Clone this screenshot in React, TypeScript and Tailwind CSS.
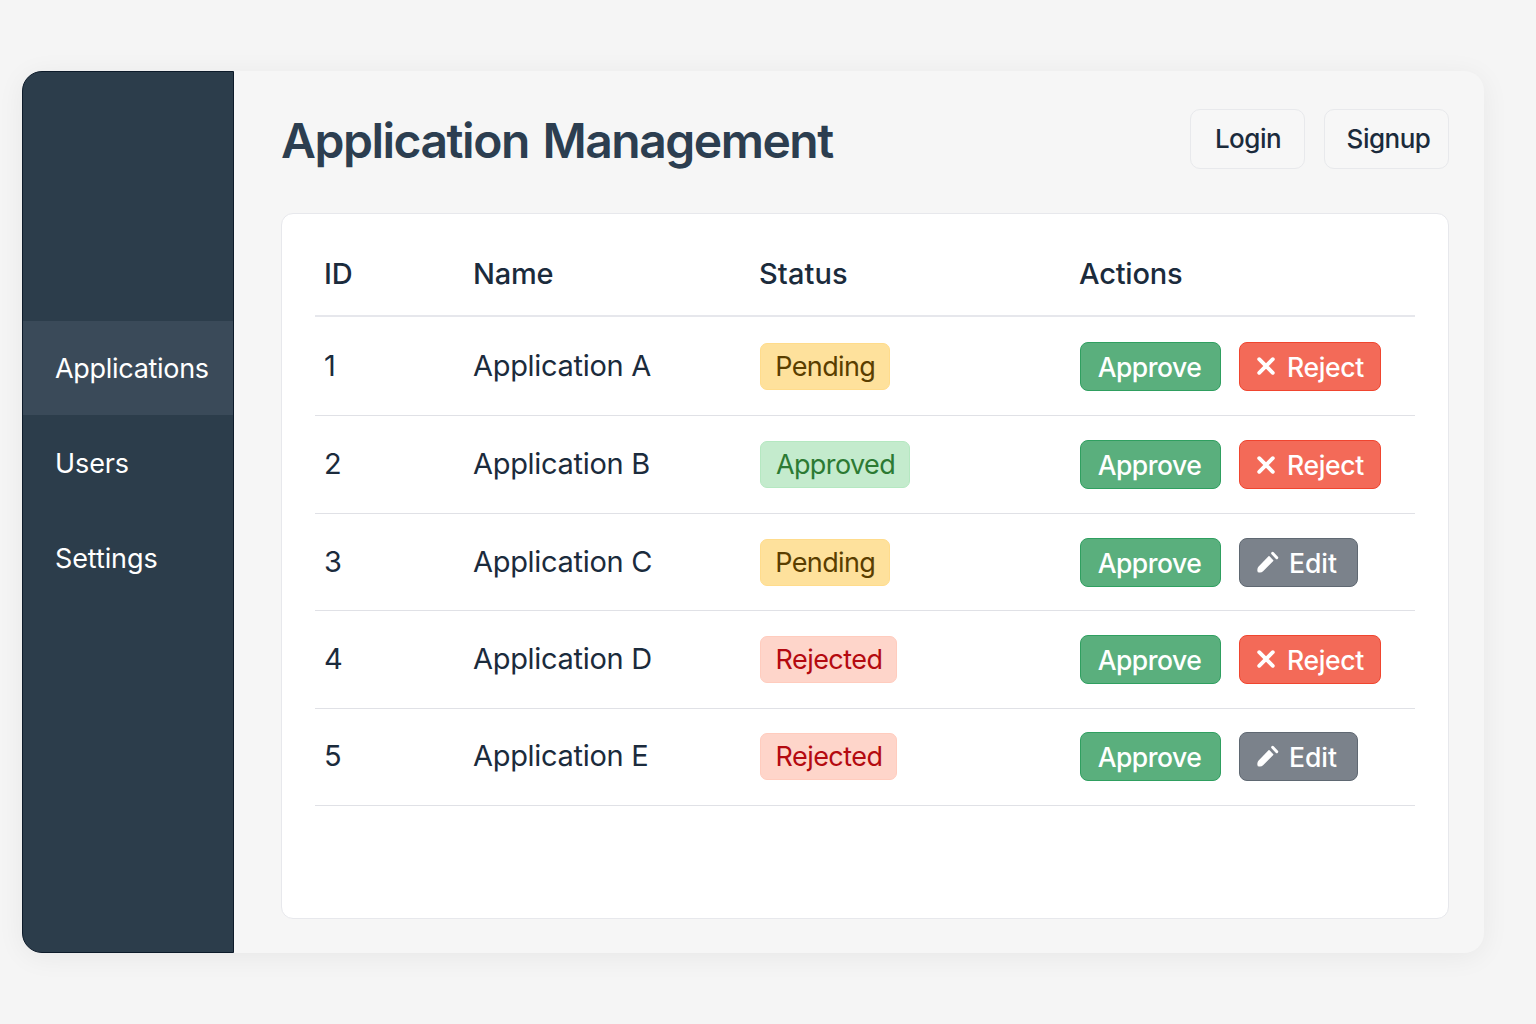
import type { ReactNode } from 'react';

type Status = 'Pending' | 'Approved' | 'Rejected';

interface Row {
  id: number;
  name: string;
  status: Status;
  secondary: 'reject' | 'edit';
  height: string;
}

const rows: Row[] = [
  { id: 1, name: 'Application A', status: 'Pending', secondary: 'reject', height: 'h-[99px]' },
  { id: 2, name: 'Application B', status: 'Approved', secondary: 'reject', height: 'h-[98px]' },
  { id: 3, name: 'Application C', status: 'Pending', secondary: 'edit', height: 'h-[97px]' },
  { id: 4, name: 'Application D', status: 'Rejected', secondary: 'reject', height: 'h-[98px] pb-[1px]' },
  { id: 5, name: 'Application E', status: 'Rejected', secondary: 'edit', height: 'h-[97px] pb-[2px]' },
];

const badgeStyles: Record<Status, string> = {
  Pending: 'w-[129.5px] bg-[#fee19c] border-[#ffdc8c] text-[#5a3e00] tracking-[-0.6px]',
  Approved: 'w-[150px] bg-[#c4ebcd] border-[#b5e8c1] text-[#2c7a33] tracking-[-0.6px]',
  Rejected: 'w-[137px] bg-[#fed5ca] border-[#ffccbe] text-[#b40a10] tracking-[-0.55px]',
};

const columns = 'grid grid-cols-[159px_286px_320px_1fr] items-center';

function Badge({ status }: { status: Status }) {
  return (
    <span
      className={`flex h-[47px] items-center justify-center rounded-[7px] border pt-[2px] pl-[1px] text-[27px] ${badgeStyles[status]}`}
    >
      {status}
    </span>
  );
}

function Button({ className, children }: { className: string; children: ReactNode }) {
  return (
    <button
      className={`flex h-[49px] items-center rounded-[8px] border pt-[3px] text-[26.5px] font-medium text-white ${className}`}
    >
      {children}
    </button>
  );
}

function CrossIcon() {
  return (
    <svg width="18" height="18" viewBox="0 0 18 18" fill="none" className="mt-[-3px] shrink-0">
      <path d="M2.2 2.2L15.8 15.8M15.8 2.2L2.2 15.8" stroke="currentColor" strokeWidth="3.8" strokeLinecap="round" />
    </svg>
  );
}

function PencilIcon() {
  return (
    <svg width="22" height="22" viewBox="0 0 22 22" fill="currentColor" className="mt-[-3px] shrink-0">
      <path
        d="M12 5.6L15.8 9.6L5.6 19.8C4.8 20.6 4 20.9 3 20.9H2.2C1.4 20.9 1 20.5 1 19.7V18.8C1 17.7 1.4 16.8 2.1 16Z"
        stroke="currentColor"
        strokeWidth="1.3"
        strokeLinejoin="round"
      />
      <path d="M15.6 2.3L19.8 6.7" stroke="currentColor" strokeWidth="3" strokeLinecap="round" />
    </svg>
  );
}

function NavItem({ label, active = false }: { label: string; active?: boolean }) {
  return (
    <a
      className={`flex items-center pl-[32px] text-[27px] text-white ${
        active ? 'mb-px h-[94px] bg-[#3a4a59] pt-[3px] tracking-[-0.3px]' : 'h-[95px] pt-[2px] tracking-[-0.1px]'
      }`}
    >
      {label}
    </a>
  );
}

export default function App() {
  return (
    <div className="h-[1024px] w-[1536px] overflow-hidden bg-[#f5f5f5] pt-[71px] pl-[22px] font-['Inter',sans-serif] text-[#1b2b3c]">
      <div className="flex h-[882px] w-[1462px] rounded-[20px] bg-[#f6f6f6] shadow-[0_4px_28px_rgba(0,0,0,0.06)]">
        <aside className="w-[212px] shrink-0 rounded-l-[20px] border border-[#0d1b2a] bg-[#2c3d4b] pt-[249px]">
          <nav className="flex flex-col">
            <NavItem label="Applications" active />
            <NavItem label="Users" />
            <NavItem label="Settings" />
          </nav>
        </aside>

        <main className="flex flex-1 flex-col pr-[35px] pl-[47px]">
          <header className="flex h-[142px] items-start justify-between pt-[38px]">
            <h1 className="mt-[2px] text-[48px] leading-[60px] font-semibold tracking-[-1.48px] text-[#2c3e50] [word-spacing:3px]">
              Application Management
            </h1>
            <div className="flex gap-[19px]">
              <button className="h-[60px] w-[115px] rounded-[10px] border border-[#e8e9ec] bg-[#f7f7f7] pb-[2px] pl-[1px] text-[26px] font-medium tracking-[-0.5px]">
                Login
              </button>
              <button className="h-[60px] w-[125px] rounded-[10px] border border-[#e8e9ec] bg-[#f7f7f7] pb-[2px] pl-[4px] text-[26px] font-medium tracking-[-0.5px]">
                Signup
              </button>
            </div>
          </header>

          <section className="h-[706px] rounded-[12px] border border-[#e7e8ec] bg-white px-[33px]">
            <div
              className={`${columns} h-[103px] border-b-2 border-[#e6e7ec] pt-[19px] text-[29px] font-medium tracking-[-0.2px]`}
            >
              <span className="pl-[9px]">ID</span>
              <span className="-ml-px">Name</span>
              <span className="-ml-px tracking-[0.1px]">Status</span>
              <span className="-ml-px">Actions</span>
            </div>
            {rows.map((row) => (
              <div
                key={row.id}
                className={`${columns} ${row.height} border-b border-[#e0e1e6] text-[29px] tracking-[-0.3px]`}
              >
                <span className="-mt-px pl-[9px]">{row.id}</span>
                <span className="-mt-px -ml-px">{row.name}</span>
                <div className="flex">
                  <Badge status={row.status} />
                </div>
                <div className="flex gap-[18px]">
                  <Button className="w-[141px] justify-center border-[#2f9f60] bg-[#5aaf7d] pr-[2px] tracking-[-0.5px]">
                    Approve
                  </Button>
                  {row.secondary === 'reject' ? (
                    <Button className="w-[142px] gap-[12px] border-[#f0452f] bg-[#f36a58] pl-[17px] tracking-[-0.35px]">
                      <CrossIcon />
                      Reject
                    </Button>
                  ) : (
                    <Button className="w-[119px] gap-[10px] border-[#5f6872] bg-[#7b828b] pl-[17px] tracking-[0px]">
                      <PencilIcon />
                      Edit
                    </Button>
                  )}
                </div>
              </div>
            ))}
          </section>
        </main>
      </div>
    </div>
  );
}
